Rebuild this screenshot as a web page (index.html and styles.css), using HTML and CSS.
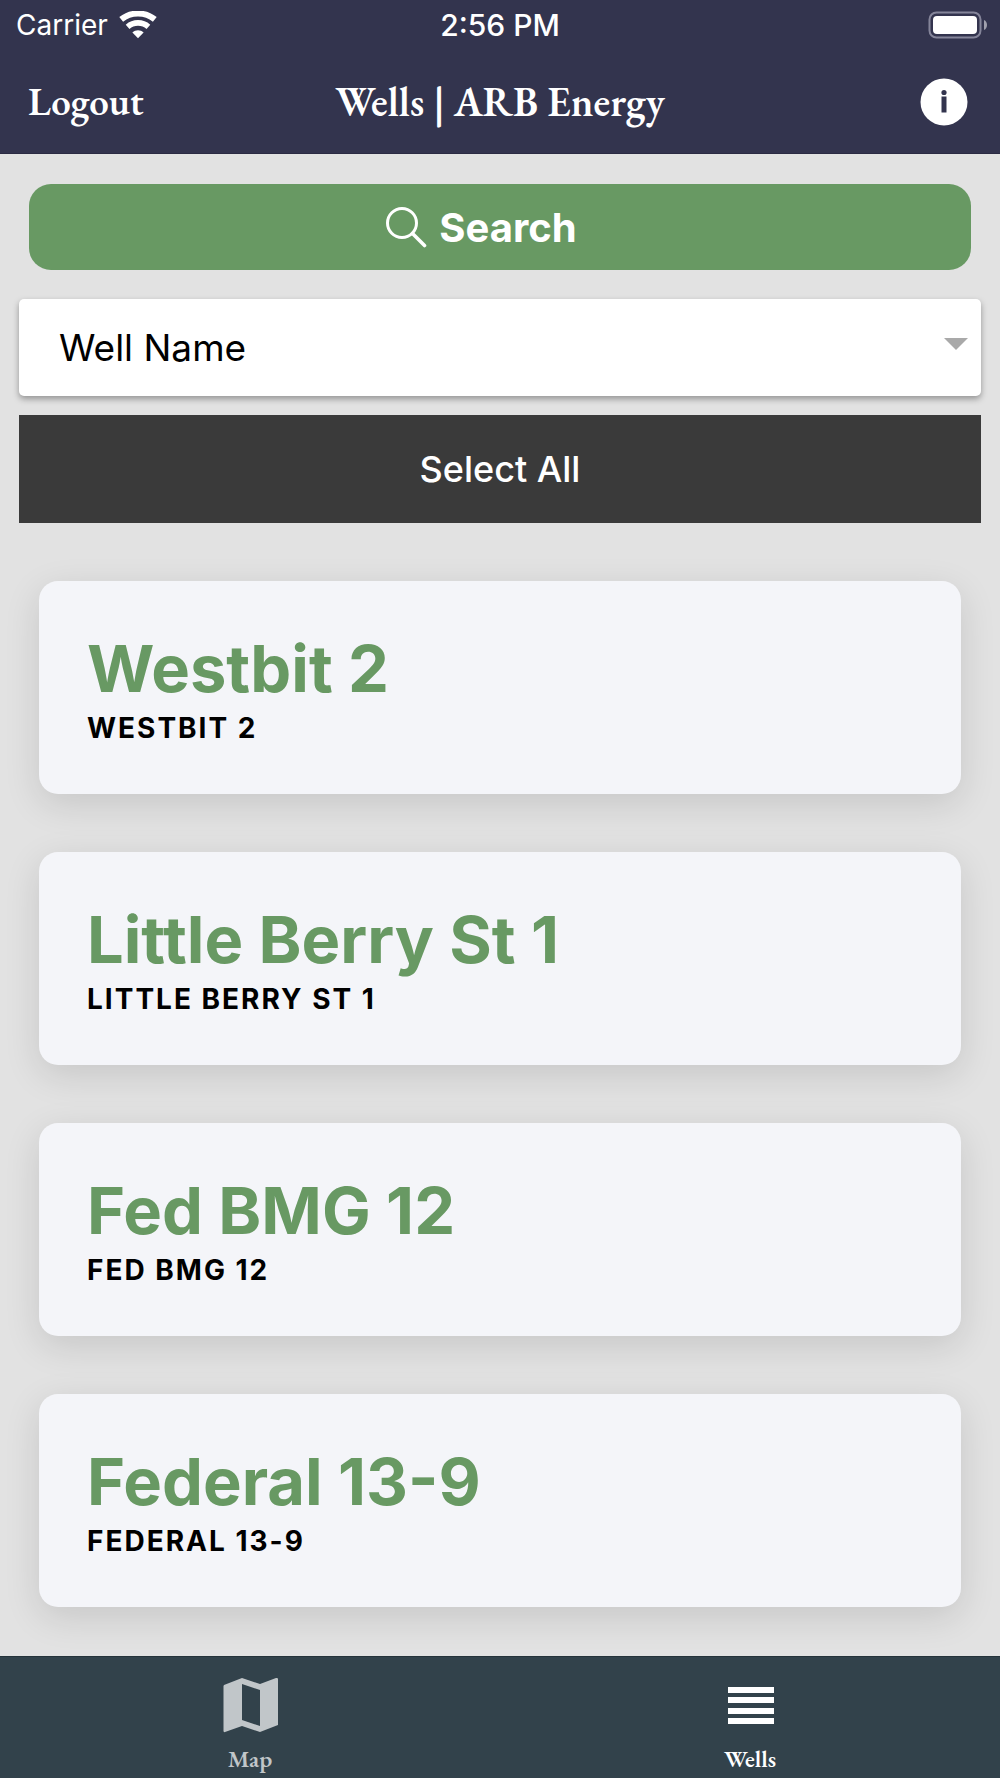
FILE: index.html
```html
<!DOCTYPE html>
<html lang="en">
<head>
<meta charset="utf-8">
<meta name="viewport" content="width=device-width, initial-scale=1">
<title>Wells | ARB Energy</title>
<link rel="stylesheet" href="styles.css">
</head>
<body>
<header class="header">
  <div class="status">
    <div class="carrier">
      <span>Carrier</span>
      <svg width="38" height="28" viewBox="0 0 38 28" fill="none" stroke="#fff" aria-hidden="true">
        <path d="M2.200 8.400C11.800 .6 26.200 .6 35.800 8.400" stroke-width="6"/>
        <path d="M8.600 15.800C14.500 10.600 23.500 10.600 29.400 15.800" stroke-width="5.600"/>
        <path d="M19 27.200L13.400 21.600C16.600 18.400 21.400 18.400 24.600 21.600Z" fill="#fff" stroke="none"/>
      </svg>
    </div>
    <span class="time">2:56 PM</span>
    <svg class="battery" width="60" height="28" viewBox="0 0 60 28" aria-hidden="true">
      <rect x="1.500" y="1.500" width="51" height="25" rx="7" fill="none" stroke="#85859a" stroke-width="2"/>
      <rect x="5" y="5" width="44" height="18" rx="4" fill="#fff"/>
      <path d="M56 9C60 10.500 60 17.500 56 19Z" fill="#a0a0ad"/>
    </svg>
  </div>
  <div class="nav">
    <button class="logout" type="button">Logout</button>
    <h1 class="title">Wells | ARB Energy</h1>
    <button class="info" type="button" aria-label="Information">
      <svg width="48" height="48" viewBox="0 0 48 48" aria-hidden="true">
        <circle cx="24" cy="24" r="23.500" fill="#fff"/>
        <circle cx="24" cy="14.500" r="2.600" fill="#33344e"/>
        <path d="M21.500 18.500h5v16h-5z" fill="#33344e"/>
      </svg>
    </button>
  </div>
</header>

<main class="content">
  <button class="search" type="button">
    <svg width="42" height="42" viewBox="0 0 42 42" fill="none" stroke="#fff" stroke-width="3" stroke-linecap="round" aria-hidden="true">
      <circle cx="17" cy="17" r="14.500"/>
      <path d="M27.500 27.500L39.500 39.500" stroke-width="3.600"/>
    </svg>
    <span>Search</span>
  </button>
  <div class="picker">
    <select class="picker-select" aria-label="Sort by">
      <option>Well Name</option>
    </select>
    <svg class="picker-arrow" width="24" height="12" viewBox="0 0 24 12" aria-hidden="true"><path d="M0 0h24L12 12z" fill="#a9a9a9"/></svg>
  </div>
  <button class="select-all" type="button">Select All</button>
  <ul class="wells">
    <li class="card"><h2 class="name">Westbit 2</h2><p class="alias">WESTBIT 2</p></li>
    <li class="card"><h2 class="name">Little Berry St 1</h2><p class="alias">LITTLE BERRY ST 1</p></li>
    <li class="card"><h2 class="name">Fed BMG 12</h2><p class="alias">FED BMG 12</p></li>
    <li class="card"><h2 class="name">Federal 13-9</h2><p class="alias">FEDERAL 13-9</p></li>
  </ul>
</main>

<nav class="tabs">
  <a class="tab" href="#map">
    <svg width="56" height="56" viewBox="0 0 56 56" aria-hidden="true">
      <path fill="currentColor" fill-rule="evenodd" d="M2 8L20 1L38 7L54 1Q56 .5 56 2V48L38 55L20 49L3 55Q1.500 55.500 1.500 54V9ZM20 7V43L38 49V13Z"/>
    </svg>
    <span>Map</span>
  </a>
  <a class="tab active" href="#wells" aria-current="page">
    <svg width="56" height="56" viewBox="0 0 56 56" aria-hidden="true">
      <path fill="currentColor" d="M6 10h46v6H6zM6 20h46v6H6zM6 31h46v6H6zM6 41h46v6H6z"/>
    </svg>
    <span>Wells</span>
  </a>
</nav>
</body>
</html>
```
FILE: styles.css
```css
* {
  box-sizing: border-box;
}

body {
  margin: 0;
  min-height: 100vh;
  display: flex;
  flex-direction: column;
  background: #e2e2e2;
  color: #000;
  font-family: Inter, "Liberation Sans", sans-serif;
}

button {
  border: 0;
  padding: 0;
  background: none;
  color: #fff;
  font: inherit;
}

svg {
  display: block;
}

.header {
  background: #33344e;
  border-bottom: 1px solid #2b2b43;
  color: #fff;
}

.status,
.nav {
  display: grid;
  grid-template-columns: 1fr auto 1fr;
  align-items: center;
}

.status {
  height: 50px;
  padding: 0 12px;
  font-size: 28px;
}

.carrier {
  display: flex;
  align-items: center;
  gap: 11px;
  padding-left: 4px;
}

.time {
  font-size: 30px;
  font-weight: 500;
}

.battery {
  justify-self: end;
}

.nav {
  height: 103px;
  padding: 0 28px;
  font-family: "EB Garamond", "Liberation Serif", serif;
  font-size: 39px;
  font-weight: 600;
}

.logout {
  justify-self: start;
}

.title {
  margin: 0;
  font-size: 41px;
  font-weight: 600;
}

.info {
  justify-self: end;
  margin-right: 4px;
}

.content {
  flex: 1;
  display: flex;
  flex-direction: column;
  padding: 30px 19px 45px;
}

.search {
  display: flex;
  align-items: center;
  justify-content: center;
  gap: 12px;
  height: 86px;
  margin: 0 10px 29px;
  padding-right: 38px;
  border-radius: 22px;
  background: #689963;
  font-size: 40px;
  font-weight: 700;
}

.picker {
  position: relative;
  margin-bottom: 19px;
}

.picker-select {
  display: block;
  width: 100%;
  height: 97px;
  padding: 0 60px 0 40px;
  border: 0;
  border-radius: 5px;
  appearance: none;
  background: #fff;
  box-shadow: 0 3px 6px rgba(0, 0, 0, 0.35);
  color: #000;
  font: inherit;
  font-size: 37px;
}

.picker-arrow {
  position: absolute;
  top: 39px;
  right: 13px;
  pointer-events: none;
}

.select-all {
  height: 108px;
  background: #3a3a3a;
  font-size: 36px;
  font-weight: 500;
}

.wells {
  display: flex;
  flex-direction: column;
  gap: 58px;
  margin: 58px 20px 0;
  padding: 0;
  list-style: none;
}

.card {
  padding: 48px 48px 47px;
  border-radius: 19px;
  background: #f4f5f9;
  box-shadow: 0 10px 36px rgba(0, 0, 0, 0.12);
}

.name {
  margin: 0;
  color: #689963;
  font-size: 65px;
  font-weight: 700;
  line-height: 80px;
}

.alias {
  margin: 0;
  font-size: 28px;
  font-weight: 700;
  letter-spacing: 2px;
  line-height: 38px;
}

.tabs {
  display: grid;
  grid-template-columns: 1fr 1fr;
  height: 122px;
  background: #32424b;
  border-top: 1px solid #25333b;
  font-family: "EB Garamond", "Liberation Serif", serif;
  font-size: 24px;
  font-weight: 600;
  line-height: 26px;
}

.tab {
  display: flex;
  flex-direction: column;
  align-items: center;
  gap: 13px;
  padding-top: 20px;
  color: #c1c6c9;
  text-decoration: none;
}

.active {
  color: #fff;
}
```
